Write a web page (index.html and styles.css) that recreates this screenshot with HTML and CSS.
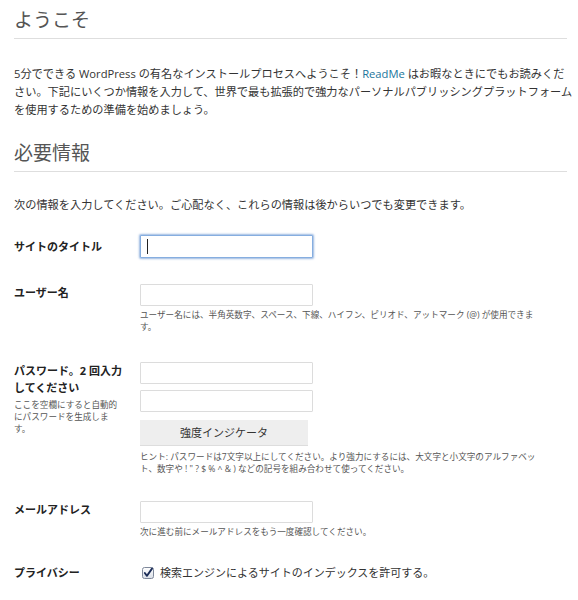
FILE: index.html
```html
<!DOCTYPE html>
<html lang="ja">
<head>
  <meta charset="UTF-8" />
  <title>WordPress › インストール</title>
  <link rel="stylesheet" href="styles.css">
</head>
<body>
  <div class="wrap">
    <h1 class="section-title">ようこそ</h1>
    <p class="lead">5分でできる WordPress の有名なインストールプロセスへようこそ！<a href="#">ReadMe</a> はお暇なときにでもお読みください。下記にいくつか情報を入力して、世界で最も拡張的で強力なパーソナルパブリッシングプラットフォームを使用するための準備を始めましょう。</p>

    <h1 class="section-title">必要情報</h1>
    <p class="lead intro">次の情報を入力してください。ご心配なく、これらの情報は後からいつでも変更できます。</p>

    <form class="form-table">
      <div class="row row-site">
        <label class="label" for="weblog_title">サイトのタイトル</label>
        <div class="field">
          <input type="text" id="weblog_title" class="text focused" />
          <span class="caret"></span>
        </div>
      </div>

      <div class="row row-user">
        <label class="label" for="user_login">ユーザー名</label>
        <div class="field">
          <input type="text" id="user_login" class="text" />
          <p class="desc">ユーザー名には、半角英数字、スペース、下線、ハイフン、ピリオド、アットマーク (@) が使用できます。</p>
        </div>
      </div>

      <div class="row">
        <div class="label">
          <label for="pass1">パスワード。2 回入力してください</label>
          <p class="label-note">ここを空欄にすると自動的にパスワードを生成します。</p>
        </div>
        <div class="field">
          <input type="password" id="pass1" class="text" />
          <input type="password" id="pass2" class="text" />
          <div class="pass-strength">強度インジケータ</div>
          <p class="desc hint">ヒント: パスワードは7文字以上にしてください。より強力にするには、大文字と小文字のアルファベット、数字や ! " ? $ % ^ &amp; ) などの記号を組み合わせて使ってください。</p>
        </div>
      </div>

      <div class="row">
        <label class="label" for="admin_email">メールアドレス</label>
        <div class="field">
          <input type="text" id="admin_email" class="text" />
          <p class="desc">次に進む前にメールアドレスをもう一度確認してください。</p>
        </div>
      </div>

      <div class="row row-privacy">
        <div class="label">プライバシー</div>
        <div class="field">
          <label class="check">
            <svg class="checkbox" width="12" height="12" viewBox="0 0 12 12">
              <defs>
                <linearGradient id="boxfill" x1="0" y1="0" x2="0" y2="1">
                  <stop offset="0" stop-color="#ffffff" />
                  <stop offset="1" stop-color="#d9dee7" />
                </linearGradient>
              </defs>
              <rect x="0.5" y="0.5" width="11" height="11" rx="2" fill="url(#boxfill)" stroke="#7e889a" />
              <path d="M2.8 6 L5 8.8 L10 1.6" fill="none" stroke="#1b2c57" stroke-width="1.9" stroke-linecap="round" stroke-linejoin="round" />
            </svg>
            検索エンジンによるサイトのインデックスを許可する。
          </label>
        </div>
      </div>
    </form>
  </div>
</body>
</html>
```

FILE: styles.css
```css
body {
  margin: 0;
  background: #fff;
  color: #333;
  font-family: "Open Sans", "Noto Sans CJK JP", sans-serif;
}
.wrap {
  padding: 0 4px 0 14px;
}
a {
  color: #21759b;
  text-decoration: none;
}

h1.section-title {
  margin: 0 7px 0 0;
  padding: 8px 0 6px;
  border-bottom: 1px solid #dedede;
  font-size: 19px;
  font-weight: normal;
  color: #555;
  line-height: 24px;
}
p.lead {
  margin: 26px 0 14px;
  font-size: 11.2px;
  line-height: 18px;
}
p.lead.intro {
  margin: 24px 0 21px;
}

/* form rows: label column + field column */
.form-table {
  display: flex;
  flex-direction: column;
  gap: 26px;
}
.row {
  display: grid;
  grid-template-columns: 126px 1fr;
}
.row-user {
  padding-bottom: 3px;
}
.label {
  font-size: 11px;
  font-weight: bold;
  line-height: 17px;
  padding-right: 10px;
  color: #222;
}
.row-site .label {
  padding-top: 3px;
}
.label-note {
  width: 106px;
  margin: 3px 0 0;
  font-size: 8.6px;
  font-weight: normal;
  line-height: 12px;
  color: #555;
}

.field {
  position: relative;
}
input.text {
  display: block;
  box-sizing: border-box;
  width: 173px;
  height: 22px;
  margin: 0;
  border: 1px solid #dcdcdc;
  border-radius: 1px;
  background: #fff;
  outline: none;
}
input.text + input.text {
  margin-top: 6px;
}
input.text.focused {
  height: 23px;
  border-color: #86aee0;
  box-shadow: 0 0 2px 1px rgba(120, 160, 215, 0.75);
}
.caret {
  position: absolute;
  left: 7px;
  top: 4px;
  width: 1px;
  height: 15px;
  background: #222;
}
.pass-strength {
  box-sizing: border-box;
  width: 168px;
  height: 26px;
  margin-top: 8px;
  border-bottom: 1px solid #ddd;
  background: #eee;
  font-size: 11px;
  line-height: 25px;
  text-align: center;
}
.desc {
  max-width: 405px;
  margin: 3px 0 0;
  font-size: 8.6px;
  line-height: 12px;
  color: #555;
}
.desc.hint {
  margin-top: 5px;
}

.check {
  display: flex;
  align-items: center;
  gap: 6px;
  font-size: 11px;
  line-height: 17px;
  padding-left: 2px;
}
.checkbox {
  flex: none;
}
```
